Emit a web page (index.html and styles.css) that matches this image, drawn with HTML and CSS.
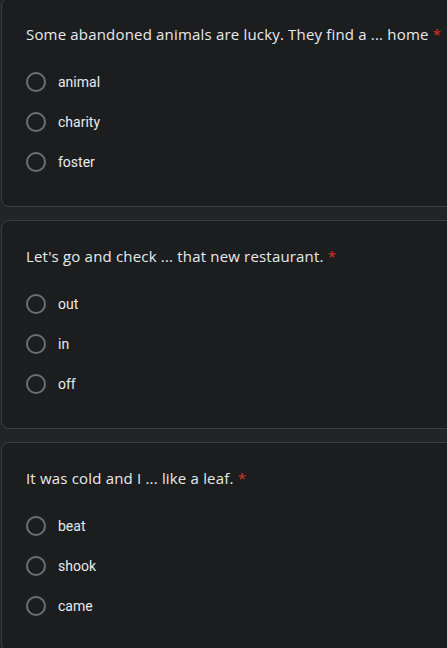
FILE: index.html
```html
<!DOCTYPE html>
<html lang="en">
<head>
<meta charset="utf-8">
<title>Form</title>
<link rel="stylesheet" href="styles.css">
</head>
<body>
<main class="form">
  <section class="card first">
    <div class="question">Some abandoned animals are lucky. They find a ... home <span class="req">*</span></div>
    <ul class="options">
      <li class="option"><span class="radio"></span><span class="label">animal</span></li>
      <li class="option"><span class="radio"></span><span class="label">charity</span></li>
      <li class="option"><span class="radio"></span><span class="label">foster</span></li>
    </ul>
  </section>
  <section class="card">
    <div class="question">Let's go and check ... that new restaurant. <span class="req">*</span></div>
    <ul class="options">
      <li class="option"><span class="radio"></span><span class="label">out</span></li>
      <li class="option"><span class="radio"></span><span class="label">in</span></li>
      <li class="option"><span class="radio"></span><span class="label">off</span></li>
    </ul>
  </section>
  <section class="card">
    <div class="question">It was cold and I ... like a leaf. <span class="req">*</span></div>
    <ul class="options">
      <li class="option"><span class="radio"></span><span class="label">beat</span></li>
      <li class="option"><span class="radio"></span><span class="label">shook</span></li>
      <li class="option"><span class="radio"></span><span class="label">came</span></li>
    </ul>
  </section>
</main>
</body>
</html>
```
FILE: styles.css
```css
html, body {
  margin: 0;
  padding: 0;
  background: #232427;
  overflow: hidden;
}
.form {
  display: flex;
  flex-direction: column;
  gap: 13px;
  padding-left: 1px;
  margin-right: -20px;
}
.card {
  background: #1c1d1f;
  border: 1px solid #3c3d40;
  border-radius: 8px;
  padding: 23px 24px 24px 24px;
}
.card.first {
  margin-top: -2px;
}
.question {
  font-family: "Open Sans", sans-serif;
  font-size: 15px;
  line-height: 24px;
  color: #e8eaed;
  letter-spacing: 0.18px;
  white-space: nowrap;
}
.req {
  color: #d93025;
}
.options {
  list-style: none;
  margin: 16px 0 0 0;
  padding: 0;
}
.option {
  display: flex;
  align-items: center;
  height: 40px;
  gap: 12px;
}
.radio {
  box-sizing: border-box;
  width: 20px;
  height: 20px;
  border: 2px solid #6e6f72;
  border-radius: 50%;
  flex: none;
}
.label {
  font-family: Roboto, sans-serif;
  font-size: 14px;
  color: #e8eaed;
}
```
